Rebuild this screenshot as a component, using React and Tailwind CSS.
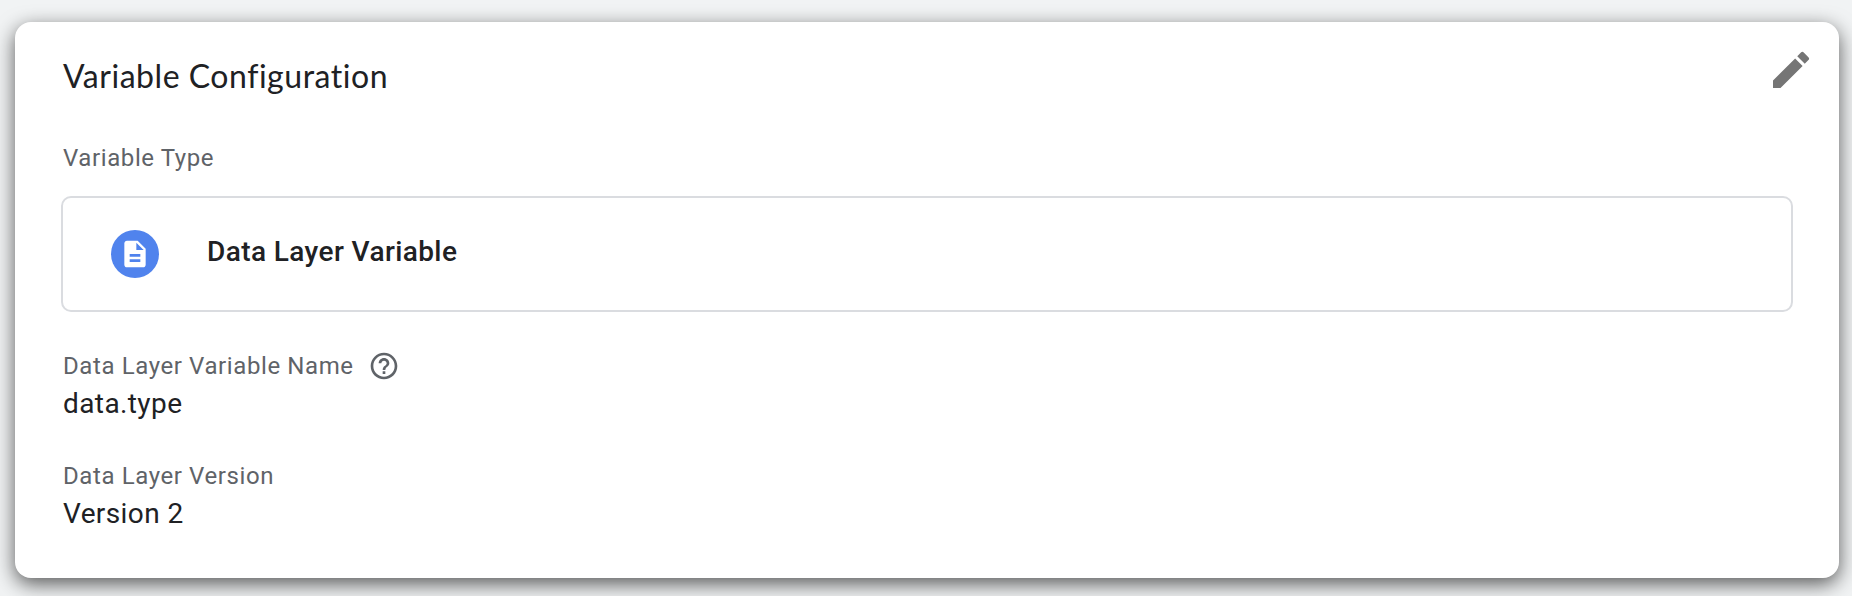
import React from "react";
import { MdDescription, MdEdit, MdHelpOutline } from "react-icons/md";

const fields = [
    {
        label: "Data Layer Variable Name",
        value: "data.type",
        hasHelp: true,
    },
    {
        label: "Data Layer Version",
        value: "Version 2",
        hasHelp: false,
    },
];

const Label = ({ children }) => (
    <span className="text-2xl leading-8 tracking-[0.6px] text-[#5f6368]">
        {children}
    </span>
);

const App = () => {
    return (
        <main className="h-screen overflow-hidden bg-[#f1f3f4] px-[15px] pt-[22px] font-['Roboto',sans-serif] text-[#202124]">
            <section className="h-[556px] w-[1824px] rounded-2xl bg-white pt-6 pr-6 pl-[46px] shadow-[0_6px_20px_rgba(0,0,0,0.64)]">
                {/* Header */}
                <header className="flex h-24 items-start justify-between">
                    <h2 className="pt-[10px] pl-[2px] font-['Lato',sans-serif] text-[32px] leading-10 tracking-[0.53px]">
                        Variable Configuration
                    </h2>
                    <button title="Edit">
                        <MdEdit className="h-12 w-12 text-[#757575]" />
                    </button>
                </header>

                {/* Variable type */}
                <div className="flex flex-col gap-[22px] pr-[22px]">
                    <div className="flex pl-[2px]">
                        <Label>Variable Type</Label>
                    </div>
                    <div className="flex h-[116px] items-start rounded-[10px] border-2 border-[#dadce0] px-12 pt-8">
                        <div className="flex h-12 w-12 items-center justify-center rounded-full bg-[#5083ed]">
                            <MdDescription className="h-8 w-8 text-white" />
                        </div>
                        <span className="pt-1 pl-12 text-[28px] leading-9 font-medium tracking-[0.4px]">
                            Data Layer Variable
                        </span>
                    </div>
                </div>

                {/* Fields */}
                <div className="flex flex-col gap-[38px] pt-[38px] pl-[2px]">
                    {fields.map((field) => (
                        <div key={field.label} className="flex flex-col">
                            <div className="flex items-center gap-[14px]">
                                <Label>{field.label}</Label>
                                {field.hasHelp && (
                                    <MdHelpOutline className="h-8 w-8 text-[#5f6368]" />
                                )}
                            </div>
                            <span className="pt-1 text-[28px] leading-9 tracking-[0.4px]">
                                {field.value}
                            </span>
                        </div>
                    ))}
                </div>
            </section>
        </main>
    );
};

export default App;
